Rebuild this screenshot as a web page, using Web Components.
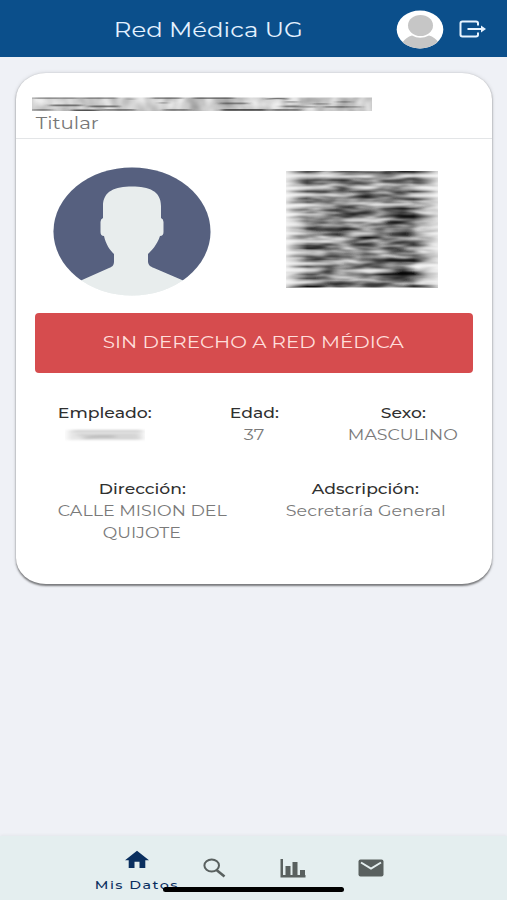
<!DOCTYPE html>
<html lang="es"><head><meta charset="utf-8"><title>Red Médica UG</title>
<style>html,body{margin:0;height:100%;overflow:hidden;font-family:Montserrat,Inter,"Liberation Sans",sans-serif}</style></head><body>
<medical-app></medical-app>
<script>
const define=(name,html,setup)=>customElements.define(name,class extends HTMLElement{
 connectedCallback(){if(this.shadowRoot)return;this.attachShadow({mode:'open'}).innerHTML=typeof html==='function'?html(this):html;if(setup)setup(this.shadowRoot,this)}});

/* One line of wide lettering, fitted to the width w, baseline at b in a box h high */
define('wide-text',e=>{const a=n=>e.getAttribute(n);return `<style>:host{display:block;width:${a('w')}px;height:${a('h')}px;flex:none}svg{display:block;overflow:visible}</style>
<svg width="${a('w')}" height="${a('h')}"><text x="-.2" y="${a('b')}" fill="currentColor" font-size="${a('s')}" font-weight="${a('wt')||400}" letter-spacing="${a('ls')||0}" textLength="${a('w')}" lengthAdjust="spacingAndGlyphs">${e.textContent}</text></svg>`});

define('app-header',`<style>:host{display:grid;grid-template-columns:114px 1fr auto auto;height:57px;background:#0b4f8b;color:#e3f1ff;align-items:center;box-sizing:border-box;padding-right:20px;flex:none}
wide-text{grid-column:2}.u{margin-right:14px}svg{display:block}</style>
<wide-text w="189" h="28" b="21.500" s="20">Red Médica UG</wide-text>
<svg class="u" width="48" height="40" viewBox="0 0 48 40"><defs><clipPath id="c"><ellipse cx="24" cy="20.500" rx="23.300" ry="19"/></clipPath></defs><ellipse cx="24" cy="20.500" rx="23.300" ry="19" fill="#fff"/><g clip-path="url(#c)" fill="#c6c6c6"><ellipse cx="24.500" cy="16.500" rx="12.500" ry="10.500"/><path d="M6 34Q10 28 16 26.500Q24 31 33 26.500Q39 28 43 34V40H6Z"/></g></svg>
<svg width="29" height="20" viewBox="0 0 29 20" fill="none" stroke="#e8f4ff" stroke-width="2"><path d="M20 6.500V4.200Q20 2.500 18 2.500H4.500Q2.500 2.500 2.500 4.200V15.800Q2.500 17.500 4.500 17.500H18Q20 17.500 20 15.800V13.500M9.500 10H26"/><path d="M23 6.500L28 10L23 13.500Z" fill="#e8f4ff" stroke="none"/></svg>`);

/* Illegible name: grey strip with smudged darker strokes */
define('name-redaction',`<style>:host{display:block;width:340px;height:15px}svg{display:block}</style><svg width="340" height="15"><defs><filter id="n" x="0" y="0" width="100%" height="100%" color-interpolation-filters="sRGB"><feTurbulence type="fractalNoise" baseFrequency=".07 .07" numOctaves="2" seed="5"/><feColorMatrix values=".4 0 0 0 .58 .4 0 0 0 .58 .4 0 0 0 .58 0 0 0 0 1"/></filter><filter id="f" x="-5%" y="-50%" width="110%" height="200%"><feGaussianBlur stdDeviation="3 .5"/></filter><clipPath id="k"><rect y=".5" width="340" height="13.500"/></clipPath></defs><g clip-path="url(#k)"><rect width="340" height="14" filter="url(#n)"/><g class="m" filter="url(#f)"></g></g></svg>`,r=>{
 const segs=[[1,0,28,5],[30,0,16,5],[18,7.5,32,6],[57,8.5,30,6],[50,0,34,5],[0,12,20,4],[40,12.500,26,8],[70,12,32,5],[120,0,30,6],[132,12,26,5],[128,5,6,4],[162,0,40,7],[188,5.500,28,5],[190,12,44,8],[235,1,20,5],[238,12,30,5],[246,8.500,22,5],[252,4,14,3],[270,9,14,3],[281,6,15,3],[292,9,20,4],[305,4,14,3],[309,9,20,3]];
 r.querySelector('.m').innerHTML=segs.map(([x,y,w,d])=>`<rect x="${x}" y="${y}" width="${w}" height="1.800" fill="#333" opacity="${d/10}"/>`).join('')+`<rect x="243" y="2" width="5" height="10" fill="#fff" opacity=".8"/><rect x="96" y="3" width="8" height="9" fill="#fff" opacity=".5"/>`});

define('profile-photo',`<style>:host{display:block;width:158px;height:130px}svg{display:block}</style><svg width="158" height="130" viewBox="0 0 158 130"><defs><clipPath id="c"><ellipse cx="79" cy="64.500" rx="78.500" ry="64"/></clipPath><clipPath id="d"><rect width="158" height="113.500"/></clipPath></defs><ellipse cx="79" cy="64.500" rx="78.500" ry="64" fill="#e8eded"/><g clip-path="url(#d)"><ellipse cx="79" cy="64.500" rx="78.500" ry="64" fill="#56607f"/></g><g clip-path="url(#c)"><path fill="#e8eded" d="M79 19.500C96 19.500 108 24 108 39V51Q110.500 52 110.500 55V65Q110.500 69 107 69C104 78 99 83 95 87V94C95 98 97 99.500 101 101L129 113L150 113V130H8V113L29 113L56 101C60 99.500 61 98 61 94V87C57 83 53 78 51 69Q47.500 69 47.500 65V55Q47.500 52 50 51V39C50 24 62 19.500 79 19.500Z"/></g></svg>`);

/* Scrambled code: horizontal streaks of varying darkness, fading at both sides */
define('code-redaction',`<style>:host{display:block;width:152px;height:117px}svg{display:block}</style><svg width="152" height="117"><defs>
<filter id="n" x="0" y="0" width="100%" height="100%" color-interpolation-filters="sRGB"><feTurbulence type="fractalNoise" baseFrequency=".04 .17" numOctaves="2" seed="8"/><feColorMatrix values="1 0 0 0 .02 1 0 0 0 .02 1 0 0 0 .02 0 0 0 0 1"/></filter>
<filter id="b" x="-20%" y="-5%" width="140%" height="110%"><feGaussianBlur stdDeviation="6 .9"/></filter><clipPath id="k"><rect width="152" height="116.500"/></clipPath>
<linearGradient id="g"><stop offset="0" stop-color="#fff" stop-opacity=".8"/><stop offset=".14" stop-color="#fff" stop-opacity="0"/><stop offset=".84" stop-color="#fff" stop-opacity="0"/><stop offset="1" stop-color="#fff" stop-opacity=".75"/></linearGradient></defs>
<g clip-path="url(#k)"><rect width="152" height="117" filter="url(#n)"/><g class="s" filter="url(#b)"></g><rect width="152" height="117" fill="url(#g)"/></g></svg>`,r=>{
 const dark=[[2,0,28,10],[112,0,36,10],[66,1,28,4],[8,7,22,5],[8,10,22,5],[32,7,28,3],[60,10,22,4],[98,9,22,5],[132,7,16,5],[132,10,16,5],[0,19,32,10],[62,19,26,6],[124,19,28,10],[4,25,25,8],[72,24,22,5],[110,26,36,6],[0,37,16,8],[34,38,23,5],[94,36,44,6],[62,40,32,5],[112,44,34,10],[120,47,18,6],[98,50,24,10],[18,57,48,7],[42,62,24,7],[72,65,18,10],[102,62,32,8],[6,73,20,6],[14,76,20,9],[66,72,25,8],[112,70,18,4],[98,77,24,5],[8,83,22,5],[20,87,28,5],[94,88,42,11],[0,94,32,10],[54,92,20,3],[88,101,50,11],[88,103,44,5],[10,101,20,6],[8,106,26,6],[98,107,38,5],[32,110,28,4],[0,114,38,10],[80,113,22,7],[124,114,28,10]];
 const light=[[-6,3.500,56],[50,4,40],[110,3.500,52],[-6,15.500,48],[64,15,30],[122,15.500,38],[-6,22.500,60],[120,23,40],[-6,33,46],[82,32,45],[54,48,36],[-6,42,46],[-6,52,24],[-6,61,26],[66,61,26],[-6,69,60],[134,61,24],[80,79,20],[-6,80,34],[132,76,26],[-6,91,50],[126,93,32],[-6,98,40],[62,98,40],[140,99,18],[-6,110,36],[132,109,26],[44,105,20]];
 const bar=c=>([x,y,w,d])=>`<rect x="${x}" y="${y}" width="${w}" height="2.800" fill="${c}" opacity="${(d||8.500)/10}"/>`;
 r.querySelector('.s').innerHTML=light.map(bar('#fff')).join('')+dark.map(bar('#000')).join('')});

define('number-redaction',`<style>:host{display:block;width:80px;height:22px}svg{display:block}</style><svg width="80" height="22"><defs><filter id="f" x="-10%" y="-50%" width="120%" height="200%"><feGaussianBlur stdDeviation="3 .8"/></filter></defs><g filter="url(#f)"><rect x="3" y="7" width="75" height="10" fill="#e6e6e6"/><path d="M8 8H77M12 12H74M20 15H75" stroke="#c4c4c4" stroke-width="1.300"/><path d="M18 15L34 13.500H50" stroke="#bbb" fill="none" stroke-width="2"/></g></svg>`);

define('status-banner',`<style>:host{display:flex;justify-content:center;align-items:center;height:60px;background:#d64c4e;color:#ffdedb;border-radius:4px}</style><slot></slot>`);
define('data-field',`<style>:host{display:flex;flex-direction:column;align-items:center;color:#7a7a7a}::slotted([slot=label]){color:#303030}</style><slot name="label"></slot><slot></slot>`);

define('profile-card',`<style>:host{display:block;box-sizing:border-box;margin:16px 15px 0 15.500px;height:510.500px;background:#fff;border-radius:30px/26px;box-shadow:0 1.500px 2px #0007,0 0 4px #0002;overflow:hidden;flex:none}
.head{height:65.500px;box-sizing:border-box;border-bottom:1.500px solid #e3e5e7;padding:24px 0 0 16.500px;color:#777}.head wide-text{margin-left:3.500px}
.pics{display:flex;justify-content:space-between;box-sizing:border-box;padding:28.500px 54px 0 37.500px;height:174.500px}.pics code-redaction{margin-top:4px}
status-banner{margin:0 19.500px}.three,.two{display:grid;margin:0 15px;width:447px}.three{grid-template-columns:repeat(3,1fr);margin-top:28px;height:76px}.two{grid-template-columns:1fr 1fr}</style>
<div class="head"><name-redaction></name-redaction><wide-text w="63" h="24" b="16.500" s="16.500">Titular</wide-text></div>
<div class="pics"><profile-photo></profile-photo><code-redaction></code-redaction></div>
<status-banner><wide-text w="301" h="20" b="15.200" s="16.800">SIN DERECHO A RED MÉDICA</wide-text></status-banner>
<div class="three">
<data-field><wide-text slot="label" w="94" h="22" b="16.500" s="14.800" wt="500">Empleado:</wide-text><number-redaction></number-redaction></data-field>
<data-field><wide-text slot="label" w="49" h="22" b="16.500" s="14.800" wt="500">Edad:</wide-text><wide-text w="20.500" h="22" b="17" s="14.800">37</wide-text></data-field>
<data-field><wide-text slot="label" w="45" h="22" b="16.500" s="14.800" wt="500">Sexo:</wide-text><wide-text w="110" h="22" b="17" s="14.800">MASCULINO</wide-text></data-field></div>
<div class="two">
<data-field><wide-text slot="label" w="87" h="22" b="17" s="14.800" wt="500">Dirección:</wide-text><wide-text w="169" h="22" b="17" s="14.800">CALLE MISION DEL</wide-text><wide-text w="78" h="22" b="17" s="14.800">QUIJOTE</wide-text></data-field>
<data-field><wide-text slot="label" w="107" h="22" b="17" s="14.800" wt="500">Adscripción:</wide-text><wide-text w="160" h="22" b="17" s="14.800">Secretaría General</wide-text></data-field></div>`);

define('tab-item',`<style>:host{display:flex;flex-direction:column;align-items:center;justify-content:center;width:78.200px;height:64px;color:#59605f}:host([active]){color:#0a2f5f}::slotted(svg){display:block;flex:none}</style><slot></slot>`);
define('tab-bar',`<style>:host{display:flex;justify-content:center;margin-top:auto;height:64px;background:#e4eeef;box-shadow:0 -1px 3px #0000000c;box-sizing:border-box;padding-left:1px;position:relative;flex:none}
.grip{position:absolute;left:163px;top:51px;width:181px;height:5px;border-radius:3px;background:#000}wide-text{margin-top:5px}</style>
<tab-item active><svg style="margin-top:6px" width="24" height="19" viewBox="0 0 24 19" fill="currentColor"><path d="M12 .800L24 10.300H20.300V18H14.500V11.700H9.500V18H3.700V10.300H0Z"/></svg><wide-text w="84" h="18" b="14.500" s="11.800" wt="500" ls="1.200">Mis Datos</wide-text></tab-item>
<tab-item><svg width="23" height="20" viewBox="0 0 23 20" fill="none" stroke="currentColor" stroke-width="2"><ellipse cx="8.700" cy="7.500" rx="7.300" ry="6"/><path d="M13.500 12L21.500 18.500" stroke-width="2.600"/></svg></tab-item>
<tab-item><svg width="26" height="20" viewBox="0 0 26 20" fill="currentColor"><path d="M.5 1H3V17H25.500V19.500H.5ZM5.500 8H10.500V17H5.500ZM12.500 4H17.500V17H12.500ZM20 12H25V17H20Z"/></svg></tab-item>
<tab-item><svg width="26" height="18" viewBox="0 0 26 18"><rect x=".5" y=".5" width="25" height="17" rx="2" fill="currentColor"/><path d="M3 3.500L13 9.500L23 3.500" fill="none" stroke="#e4eeef" stroke-width="2"/></svg></tab-item><div class="grip"></div>`);
define('medical-app',`<style>:host{display:flex;flex-direction:column;width:507px;height:900px;background:#eff1f6}</style><app-header></app-header><profile-card></profile-card><tab-bar></tab-bar>`);
</script></body></html>
